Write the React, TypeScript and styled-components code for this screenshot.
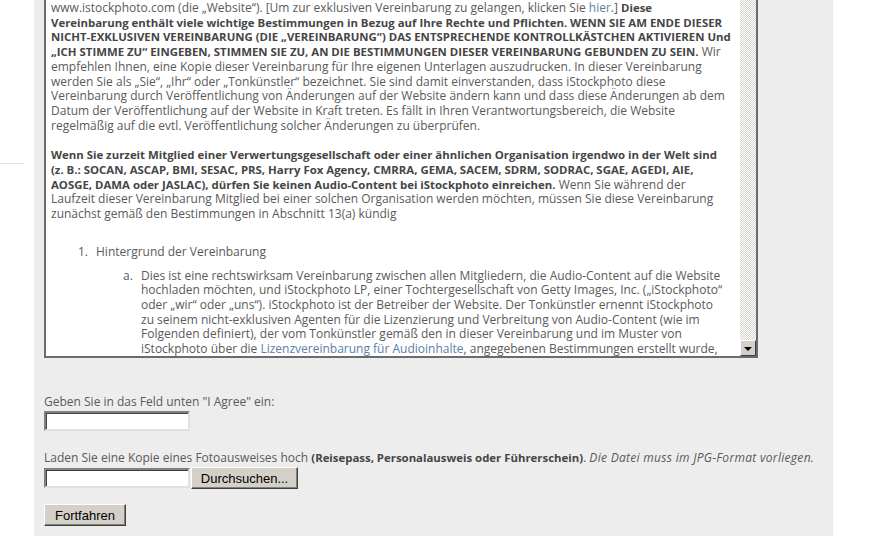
import React, { FunctionComponent } from 'react'
import styled, { createGlobalStyle } from 'styled-components'

const Colors = {
    PANEL: '#ededed',
    TEXT: '#5a5a5a',
    BOLD: '#454545',
    LINK: '#5b80a8',
    BORDER: '#6b6b6b',
    FACE: '#d4d0c8',
}

const GlobalStyle = createGlobalStyle`
    html, body {
        margin: 0;
        padding: 0;
        background: #ffffff;
    }
`

const agreementLines = {
    intro: [
        'empfehlen Ihnen, eine Kopie dieser Vereinbarung für Ihre eigenen Unterlagen auszudrucken. In dieser Vereinbarung',
        'werden Sie als „Sie“, „Ihr“ oder „Tonkünstler“ bezeichnet. Sie sind damit einverstanden, dass iStockphoto diese',
        'Vereinbarung durch Veröffentlichung von Änderungen auf der Website ändern kann und dass diese Änderungen ab dem',
        'Datum der Veröffentlichung auf der Website in Kraft treten. Es fällt in Ihren Verantwortungsbereich, die Website',
        'regelmäßig auf die evtl. Veröffentlichung solcher Änderungen zu überprüfen.',
    ],
    background: [
        'Dies ist eine rechtswirksam Vereinbarung zwischen allen Mitgliedern, die Audio-Content auf die Website',
        'hochladen möchten, und iStockphoto LP, einer Tochtergesellschaft von Getty Images, Inc. („iStockphoto“',
        'oder „wir“ oder „uns“). iStockphoto ist der Betreiber der Website. Der Tonkünstler ernennt iStockphoto',
        'zu seinem nicht-exklusiven Agenten für die Lizenzierung und Verbreitung von Audio-Content (wie im',
        'Folgenden definiert), der vom Tonkünstler gemäß den in dieser Vereinbarung und im Muster von',
    ],
}

const App: FunctionComponent = () => {
    return (
        <>
            <GlobalStyle />
            <Page>
                <Gutter>
                    <GutterRule />
                </Gutter>
                <Panel>
                    <AgreementBox>
                        <AgreementText>
                            <Paragraph>
                                <Line>
                                    www.istockphoto.com (die „Website“). [Um zur exklusiven Vereinbarung zu gelangen, klicken Sie{' '}
                                    <Link href="#">hier</Link>.] <Bold>Diese</Bold>
                                </Line>
                                <Line><Bold>Vereinbarung enthält viele wichtige Bestimmungen in Bezug auf Ihre Rechte und Pflichten. WENN SIE AM ENDE DIESER</Bold></Line>
                                <Line><Bold>NICHT-EXKLUSIVEN VEREINBARUNG (DIE „VEREINBARUNG“) DAS ENTSPRECHENDE KONTROLLKÄSTCHEN AKTIVIEREN Und</Bold></Line>
                                <Line><Bold>„ICH STIMME ZU“ EINGEBEN, STIMMEN SIE ZU, AN DIE BESTIMMUNGEN DIESER VEREINBARUNG GEBUNDEN ZU SEIN.</Bold> Wir</Line>
                                {agreementLines.intro.map((line) => <Line key={line}>{line}</Line>)}
                            </Paragraph>
                            <Paragraph>
                                <Line><Bold>Wenn Sie zurzeit Mitglied einer Verwertungsgesellschaft oder einer ähnlichen Organisation irgendwo in der Welt sind</Bold></Line>
                                <Line><Bold>(z. B.: SOCAN, ASCAP, BMI, SESAC, PRS, Harry Fox Agency, CMRRA, GEMA, SACEM, SDRM, SODRAC, SGAE, AGEDI, AIE,</Bold></Line>
                                <Line><Bold>AOSGE, DAMA oder JASLAC), dürfen Sie keinen Audio-Content bei iStockphoto einreichen.</Bold> Wenn Sie während der</Line>
                                <Line>Laufzeit dieser Vereinbarung Mitglied bei einer solchen Organisation werden möchten, müssen Sie diese Vereinbarung</Line>
                                <Line>zunächst gemäß den Bestimmungen in Abschnitt 13(a) kündig</Line>
                            </Paragraph>
                            <ListItem indent={27} gap={23}>
                                <Marker>1.</Marker>
                                <div>
                                    <Line>Hintergrund der Vereinbarung</Line>
                                    <ListItem indent={27} gap={9}>
                                        <Marker>a.</Marker>
                                        <div>
                                            {agreementLines.background.map((line) => <Line key={line}>{line}</Line>)}
                                            <Line>
                                                iStockphoto über die <Link href="#">Lizenzvereinbarung für Audioinhalte</Link>, angegebenen Bestimmungen erstellt wurde,
                                            </Line>
                                        </div>
                                    </ListItem>
                                </div>
                            </ListItem>
                        </AgreementText>
                        <ScrollTrack>
                            <ArrowButton>
                                <ArrowDown />
                            </ArrowButton>
                        </ScrollTrack>
                    </AgreementBox>

                    <Form>
                        <Field after={19}>
                            <FieldLabel>Geben Sie in das Feld unten "I Agree" ein:</FieldLabel>
                            <TextInput type="text" />
                        </Field>
                        <Field after={15}>
                            <FieldLabel>
                                Laden Sie eine Kopie eines Fotoausweises hoch{' '}
                                <Bold>(Reisepass, Personalausweis oder Führerschein)</Bold>.{' '}
                                <Hint>Die Datei muss im JPG-Format vorliegen.</Hint>
                            </FieldLabel>
                            <FileRow>
                                <TextInput type="text" />
                                <Button type="button" width={107}>Durchsuchen...</Button>
                            </FileRow>
                        </Field>
                        <Button type="button" width={82}>Fortfahren</Button>
                    </Form>
                </Panel>
                <RightMargin />
            </Page>
        </>
    )
}

const Page = styled.div`
    display: flex;
    min-height: 536px;
    font-family: 'Liberation Sans', Arial, sans-serif;
`

const Gutter = styled.div`
    width: 34px;
    flex-shrink: 0;
    padding-top: 163px;
`

const GutterRule = styled.div`
    width: 24px;
    border-top: 1px solid #e3e3e3;
`

const Panel = styled.main`
    width: 799px;
    flex-shrink: 0;
    background: ${Colors.PANEL};
    padding-left: 10px;
    box-sizing: border-box;
`

const RightMargin = styled.div`
    flex: 1;
`

const AgreementBox = styled.div`
    display: flex;
    width: 714px;
    height: 358px;
    box-sizing: border-box;
    background: #ffffff;
    border: 2px solid ${Colors.BORDER};
    border-top: none;
    overflow: hidden;
`

const AgreementText = styled.div`
    flex: 1;
    padding: 1px 0 0 5px;
    overflow: hidden;
    font-family: 'Open Sans', 'Liberation Sans', sans-serif;
    font-size: 12px;
    line-height: 14.7px;
    color: ${Colors.TEXT};
`

const Paragraph = styled.p`
    margin: 0 0 15px;
`

const Line = styled.span`
    display: block;
    white-space: nowrap;
`

const Bold = styled.strong`
    font-weight: bold;
    font-size: 11.4px;
    color: ${Colors.BOLD};
`

const Link = styled.a`
    color: ${Colors.LINK};
    text-decoration: none;
`

const ListItem = styled.div<{ indent: number; gap: number }>`
    display: flex;
    padding-left: ${({ indent }) => indent}px;
    margin-top: ${({ gap }) => gap}px;
`

const Marker = styled.span`
    width: 18px;
    flex-shrink: 0;
`

const ScrollTrack = styled.div`
    width: 16px;
    flex-shrink: 0;
    display: flex;
    flex-direction: column;
    justify-content: flex-end;
    background-color: #ffffff;
    background-image: repeating-conic-gradient(#d8d5cf 0 25%, #ffffff 0 50%);
    background-size: 2px 2px;
`

const ArrowButton = styled.div`
    height: 16px;
    box-sizing: border-box;
    background: ${Colors.FACE};
    border-style: solid;
    border-width: 1px;
    border-color: #ffffff #404040 #404040 #ffffff;
    display: flex;
    align-items: center;
    justify-content: center;
`

const ArrowDown = styled.span`
    width: 0;
    height: 0;
    border-left: 4px solid transparent;
    border-right: 4px solid transparent;
    border-top: 4px solid #000000;
    margin-top: 1px;
`

const Form = styled.form`
    display: flex;
    flex-direction: column;
    align-items: flex-start;
    padding-top: 36px;
`

const Field = styled.div<{ after: number }>`
    display: flex;
    flex-direction: column;
    gap: 2px;
    margin-bottom: ${({ after }) => after}px;
`

const FieldLabel = styled.label`
    font-family: 'Open Sans', 'Liberation Sans', sans-serif;
    font-size: 12px;
    line-height: 15px;
    color: ${Colors.TEXT};
`

const Hint = styled.em`
    font-style: italic;
    letter-spacing: 0.3px;
`

const FileRow = styled.div`
    display: flex;
    align-items: center;
    gap: 1px;
`

const TextInput = styled.input`
    width: 146px;
    height: 20px;
    box-sizing: border-box;
    margin: 0;
    padding: 1px 2px;
    background: #ffffff;
    border-style: solid;
    border-width: 2px;
    border-color: #808080 #e4e1db #e4e1db #808080;
    box-shadow: inset 1px 1px 0 #404040;
    font-family: 'Liberation Sans', Arial, sans-serif;
    font-size: 13px;
`

const Button = styled.button<{ width: number }>`
    width: ${({ width }) => width}px;
    height: 22px;
    box-sizing: border-box;
    margin: 0;
    padding: 0 6px;
    background: ${Colors.FACE};
    border-style: solid;
    border-width: 1px;
    border-color: #ffffff #404040 #404040 #ffffff;
    box-shadow: inset -1px -1px 0 #808080;
    font-family: 'Liberation Sans', Arial, sans-serif;
    font-size: 13px;
    color: #000000;
    cursor: pointer;
`

export default App
